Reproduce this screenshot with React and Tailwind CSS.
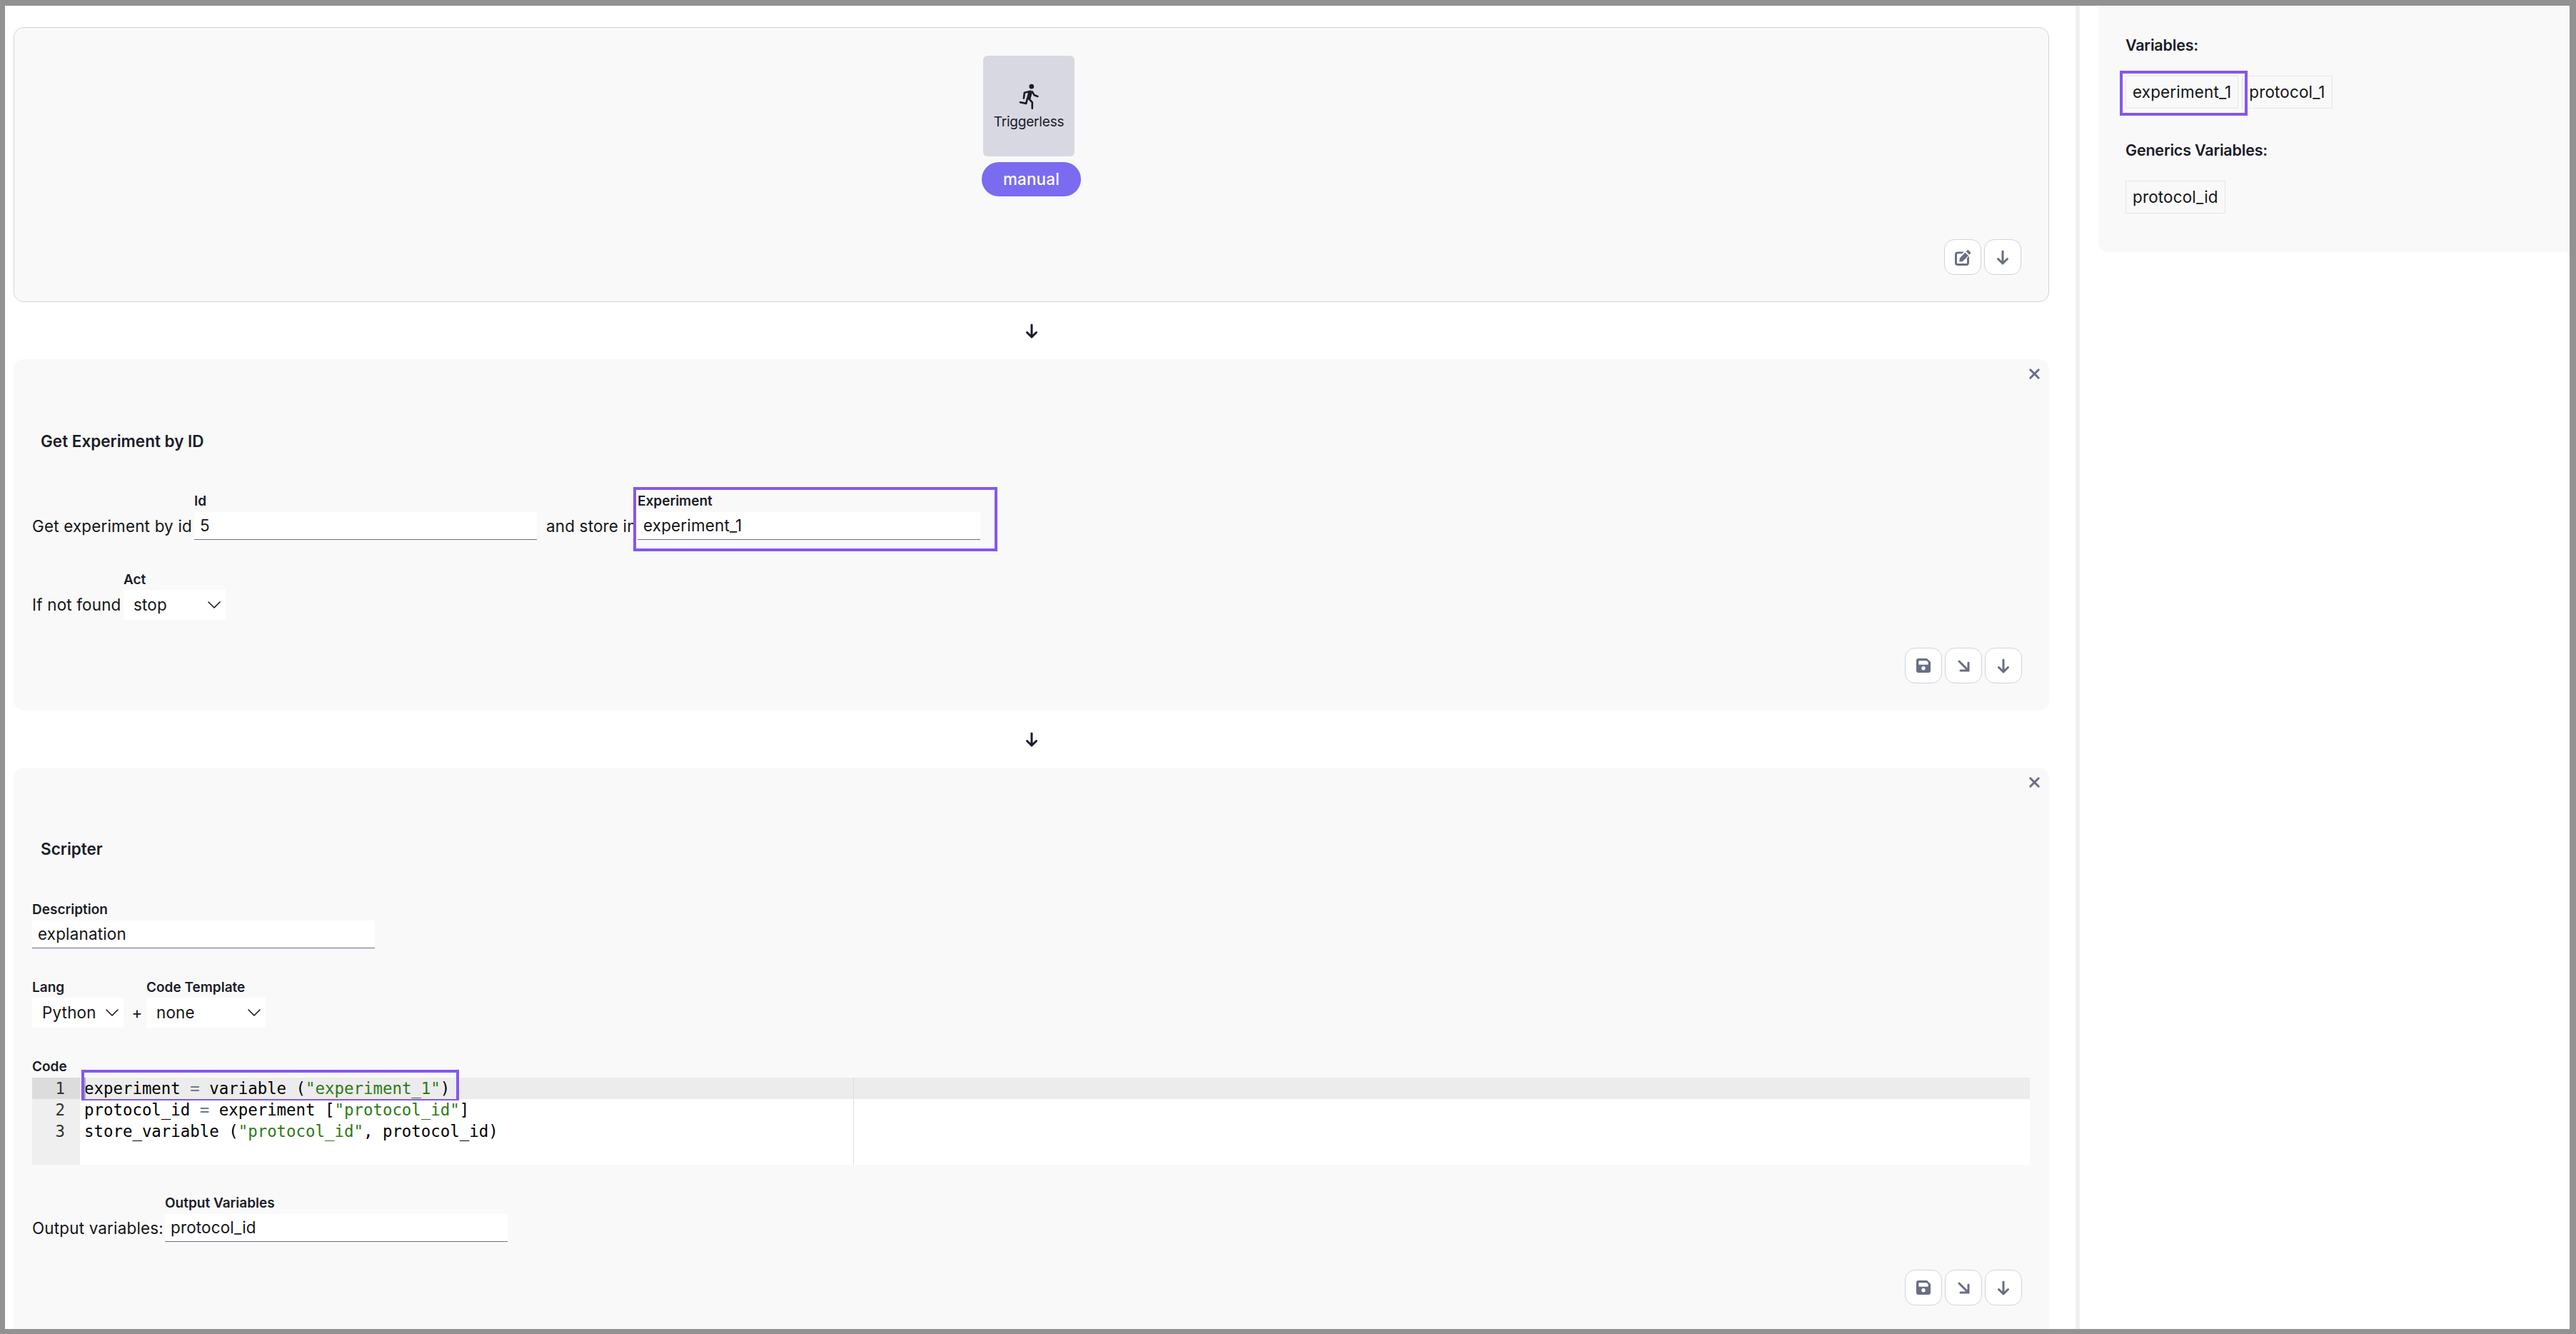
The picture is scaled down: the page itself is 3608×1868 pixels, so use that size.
import React from 'react';
import { ChevronDown, X } from 'lucide-react';

const gray = '#6a6e85';

const ArrowDownIcon = ({ color = gray }) => (
  <svg width="18" height="21" viewBox="0 0 18 21" fill="none" stroke={color} strokeWidth="3" strokeLinecap="round" strokeLinejoin="round">
    <path d="M9 2v17M2.500 12.500 9 19l6.500-6.500" />
  </svg>
);

const ArrowCornerIcon = () => (
  <svg width="17" height="17" viewBox="0 0 17 17" fill="none" stroke={gray} strokeWidth="3" strokeLinecap="round" strokeLinejoin="miter">
    <path d="M2 2l13 13M15 4v11H4" />
  </svg>
);

const EditIcon = () => (
  <svg width="23" height="23" viewBox="0 0 23 23" fill={gray}>
    <path fillRule="evenodd" d="M4 3.500h9l-2.800 2.800H4a1 1 0 0 0-1 1V19a1 1 0 0 0 1 1h12a1 1 0 0 0 1-1v-6.500l3-3V19a4 4 0 0 1-4 4H4a4 4 0 0 1-4-4V7.500a4 4 0 0 1 4-4z" />
    <path d="M17.200 1.600a1.500 1.500 0 0 1 2.100 0l2.500 2.500a1.500 1.500 0 0 1 0 2.100l-1.500 1.500-4.600-4.600zM14.400 4.400 19 9l-8 8-4.800.6.600-4.800z" />
  </svg>
);

const SaveIcon = () => (
  <svg width="20" height="20" viewBox="0 0 20 20" fill={gray}>
    <path fillRule="evenodd" d="M3 0h12l5 5v12a3 3 0 0 1-3 3H3a3 3 0 0 1-3-3V3a3 3 0 0 1 3-3zm1.300 3.300a1 1 0 0 0-1 1v3.400a1 1 0 0 0 1 1h11.400a1 1 0 0 0 1-1V5.400l-2.100-2.100zM10 11a2.700 2.700 0 1 0 0 5.400 2.700 2.700 0 0 0 0-5.400z" />
  </svg>
);

const RunnerIcon = () => (
  <svg width="28" height="36" viewBox="375 228 85 108" fill="none" stroke="#1a1c28" strokeWidth="8" strokeLinecap="round" strokeLinejoin="round">
    <circle cx="429" cy="240" r="10" fill="#1a1c28" stroke="none" />
    <path d="M396 290l3-24 26-6" />
    <path d="M432 262l9 15 14 5" />
    <path d="M424 262l-8 32" strokeWidth="17" strokeLinecap="butt" />
    <path d="M418 292l14 15v26" />
    <path d="M411 292l-5 20-25-5" />
  </svg>
);

const IconButton = ({ children }) => (
  <button className="w-[52px] h-[50px] flex items-center justify-center bg-white border border-[#d2d2de] rounded-[14px]">
    {children}
  </button>
);

const Actions = ({ save, edit }) => (
  <div className="flex justify-end gap-[4px] pr-[38px]">
    {edit && <IconButton><EditIcon /></IconButton>}
    {save && <IconButton><SaveIcon /></IconButton>}
    {save && <IconButton><ArrowCornerIcon /></IconButton>}
    <IconButton><ArrowDownIcon /></IconButton>
  </div>
);

const FlowArrow = () => (
  <div className="w-[2851px] h-[80px] flex items-center justify-center">
    <ArrowDownIcon color="#1a1c28" />
  </div>
);

const Label = ({ children }) => (
  <div className="text-[19px] leading-[24px] font-semibold text-[#1a1c28] tracking-normal">{children}</div>
);

const TextField = ({ label, value }) => (
  <div>
    <Label>{label}</Label>
    <div className="w-[480px] h-[39px] mt-[3px] px-[8px] bg-white border-b-[1.5px] border-[#6a6e85] flex items-center text-[#151515]">
      {value}
    </div>
  </div>
);

const SelectField = ({ label, value, width }) => (
  <div>
    <Label>{label}</Label>
    <div className={`${width} h-[42px] mt-[2px] pl-[14px] bg-white flex items-center justify-between text-[#151515]`}>
      {value}
      <ChevronDown size={32} color="#151515" strokeWidth={1.2} />
    </div>
  </div>
);

const Title = ({ children }) => (
  <h3 className="pl-[38px] text-[22.5px] leading-[28px] font-semibold text-[#1a1c28] tracking-normal">{children}</h3>
);

const CodeLine = ({ n, active, children }) => (
  <div className={`flex h-[30px] leading-[30px] ${active ? 'bg-[#ececec]' : ''}`}>
    <div className={`w-[67px] pr-[21px] text-right text-[#333333] ${active ? 'bg-[#dcdcdc]' : 'bg-[#efefef]'}`}>{n}</div>
    <div className="pl-[6px] text-black whitespace-pre">{children}</div>
  </div>
);

const Str = ({ children }) => <span className="text-[#2d7a17]">{children}</span>;
const Eq = () => <span className="text-[#6b7a8c]">=</span>;

const Chip = ({ children }) => (
  <span className="h-[46px] px-[9px] flex items-center border border-[#e6e6e6] text-[#151515]">{children}</span>
);

export default function App() {
  return (
    <div className="font-['Inter',sans-serif] w-[3608px] h-[1868px] border-solid border-[#929292] border-t-[8px] border-b-[7px] border-l-[7px] border-r-[9px] bg-white flex overflow-hidden text-[22.4px] text-[#151515] tracking-[0.2px]">
      {/* flow */}
      <div className="w-[2900px] pt-[30px] pl-[12px] shrink-0">
        <section className="w-[2851px] h-[385px] pt-[39px] pb-[37px] flex flex-col justify-between bg-[#f9f9f9] border border-[#d2d2de] rounded-[14px]">
          <div className="flex flex-col items-center">
            <div className="w-[128px] h-[141px] mr-[7px] pt-[39px] bg-[#d8d8e2] rounded-[6px] flex flex-col items-center text-[19px] leading-[26px] tracking-[-0.2px] text-[#1a1c28]">
              <RunnerIcon />
              <span className="mt-[5px]">Triggerless</span>
            </div>
            <div className="w-[139px] h-[48px] mt-[8px] rounded-full bg-[#7b6bf0] text-white font-medium flex items-center justify-center">
              manual
            </div>
          </div>
          <Actions edit />
        </section>

        <FlowArrow />

        <section className="relative w-[2851px] h-[492px] pt-[101px] bg-[#f9f9f9] rounded-[14px]">
          <X className="absolute top-[9px] right-[9px]" size={23} color={gray} strokeWidth={3.1} />
          <Title>Get Experiment by ID</Title>
          <div className="mt-[58px] pl-[26px] flex items-end">
            <span className="w-[227px] h-[39px] flex items-center">Get experiment by id</span>
            <TextField label="Id" value="5" />
            <span className="w-[141px] h-[39px] pl-[13px] flex items-center">and store in</span>
            <TextField label="Experiment" value="experiment_1" />
          </div>
          <div className="mt-[44px] pl-[26px] flex items-end">
            <span className="w-[128px] h-[42px] flex items-center">If not found</span>
            <SelectField label="Act" value="stop" width="w-[143px]" />
          </div>
          <div className="mt-[39px]"><Actions save /></div>
          {/* highlight around the Experiment field */}
          <div className="absolute left-[868px] top-[179px] w-[510px] h-[90px] border-[4px] border-[#8457f0]" />
        </section>

        <FlowArrow />

        <section className="relative w-[2851px] h-[790px] pt-[100px] bg-[#f9f9f9] rounded-t-[14px]">
          <X className="absolute top-[9px] right-[9px]" size={23} color={gray} strokeWidth={3.1} />
          <Title>Scripter</Title>
          <div className="mt-[59px] pl-[26px]"><TextField label="Description" value="explanation" /></div>
          <div className="mt-[43px] pl-[26px] flex items-end">
            <SelectField label="Lang" value="Python" width="w-[128px]" />
            <span className="h-[42px] w-[32px] pl-[6px] flex items-center justify-center">+</span>
            <SelectField label="Code Template" value="none" width="w-[167px]" />
          </div>
          <div className="mt-[43px] pl-[26px]">
            <Label>Code</Label>
            <div className="relative w-[2798px] h-[122px] mt-[3px] bg-white font-['DejaVu_Sans_Mono',monospace] text-[22.4px] tracking-normal">
              <CodeLine n="1" active>experiment <Eq /> variable (<Str>"experiment_1"</Str>)</CodeLine>
              <CodeLine n="2">protocol_id <Eq /> experiment [<Str>"protocol_id"</Str>]</CodeLine>
              <CodeLine n="3">store_variable (<Str>"protocol_id"</Str>, protocol_id)</CodeLine>
              <div className="h-[32px] w-[67px] bg-[#efefef]" />
              {/* print margin and cursor */}
              <div className="absolute left-[1150px] top-0 bottom-0 w-px bg-[#dcdcdc]" />
              <div className="absolute left-[73px] top-0 h-[30px] w-[2px] bg-[#b0b0b0]" />
              {/* highlight around line 1, its bottom edge runs under the next row */}
              <div className="absolute left-[69px] -top-[11px] w-[529px] h-[43px] border-[4px] border-b-[2px] border-[#8457f0]" />
            </div>
          </div>
          <div className="mt-[42px] pl-[26px] flex items-end">
            <span className="w-[186px] h-[39px] flex items-center">Output variables:</span>
            <TextField label="Output Variables" value="protocol_id" />
          </div>
          <div className="mt-[39px]"><Actions save /></div>
        </section>
      </div>

      {/* divider */}
      <div className="w-[6px] bg-[#f0f0f2] shrink-0" />

      {/* variables sidebar */}
      <aside className="ml-[26px] flex-1 self-start h-[345px] pt-[42px] pl-[38px] bg-[#f9f9f9] rounded-bl-[14px]">
        <h4 className="text-[21.5px] leading-[26px] font-semibold text-[#1a1c28] tracking-[-0.2px]">Variables:</h4>
        <div className="relative flex gap-[5px] mt-[30px]">
          <Chip>experiment_1</Chip>
          <Chip>protocol_1</Chip>
          <div className="absolute -left-[8px] -top-[7px] w-[179px] h-[63px] border-[4px] border-[#8457f0]" />
        </div>
        <h4 className="mt-[45px] text-[21.5px] leading-[26px] font-semibold text-[#1a1c28] tracking-[-0.2px]">Generics Variables:</h4>
        <div className="flex mt-[30px]"><Chip>protocol_id</Chip></div>
      </aside>
    </div>
  );
}
